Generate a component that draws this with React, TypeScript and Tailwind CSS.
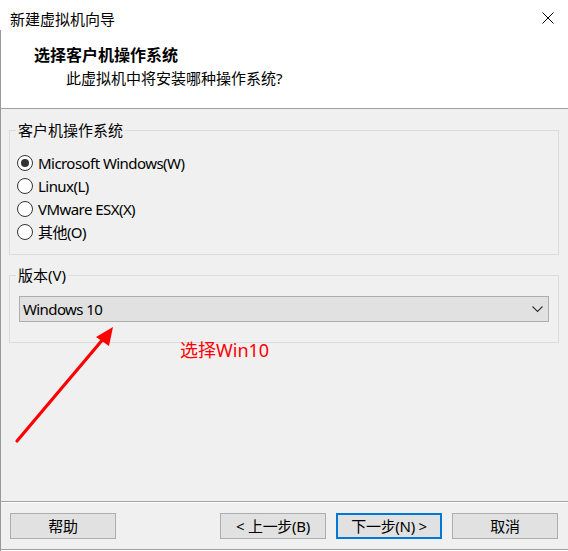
import React from "react";

const FONT = { fontFamily: '"Noto Sans", "Noto Sans CJK SC", sans-serif' };

function Radio({ label, checked }: { label: string; checked?: boolean }) {
  return (
    <div className="flex items-center h-[23px]">
      <div className="w-[16px] h-[16px] rounded-full border border-[#333333] bg-white flex items-center justify-center">
        {checked && <div className="w-[8px] h-[8px] rounded-full bg-[#333333]" />}
      </div>
      <span className="ml-[5px] leading-[20px] tracking-[-0.55px]">{label}</span>
    </div>
  );
}

function Btn({ children, primary }: { children: React.ReactNode; primary?: boolean }) {
  return (
    <div
      className={
        "w-[106px] h-[26px] flex items-center justify-center bg-[#e1e1e1] leading-[20px] tracking-[-0.3px] " +
        (primary ? "border-2 border-[#0078d7]" : "border border-[#adadad]")
      }
    >
      {children}
    </div>
  );
}

export default function App() {
  return (
    <div className="w-[568px] h-[551px] bg-white flex flex-col text-[15px] text-black relative" style={FONT}>
      {/* title bar */}
      <div className="h-[30px] flex items-start justify-between pl-[10px] pr-[14px] pt-[9px]">
        <span className="leading-[20px]">新建虚拟机向导</span>
        <svg width="12" height="12" viewBox="0 0 12 12" className="mt-[3px]">
          <path d="M0.5 0.5 L11.5 11.5 M11.5 0.5 L0.5 11.5" stroke="#000" strokeWidth="1" />
        </svg>
      </div>
      <div className="flex-1 flex flex-col border-l border-[#999999]">
        {/* header */}
        <div className="h-[78px] bg-white pt-[15px]">
          <div className="pl-[33px] font-bold text-[16px] leading-[20px]">选择客户机操作系统</div>
          <div className="pl-[65px] mt-[3px] leading-[20px]">此虚拟机中将安装哪种操作系统?</div>
        </div>
        <div className="h-px bg-[#a0a0a0]" />
        {/* body */}
        <div className="h-[392px] bg-[#f0f0f0] pt-[21px] pl-[8px] pr-[9px]">
          <div className="relative h-[125px] border border-[#dcdcdc] pl-[7px] pt-[20px]">
            <span className="absolute -top-[11px] left-[6px] px-[2px] bg-[#f0f0f0] leading-[20px]">客户机操作系统</span>
            <Radio label="Microsoft Windows(W)" checked />
            <Radio label="Linux(L)" />
            <Radio label="VMware ESX(X)" />
            <Radio label="其他(O)" />
          </div>
          <div className="relative mt-[20px] h-[68px] border border-[#dcdcdc] pl-[9px] pr-[9px] pt-[20px]">
            <span className="absolute -top-[11px] left-[6px] px-[2px] bg-[#f0f0f0] leading-[20px]">版本(V)</span>
            <div className="h-[26px] border border-[#adadad] bg-[#e1e1e1] flex items-center justify-between pl-[3px] pr-[5px]">
              <span className="leading-[20px] tracking-[-0.6px]">Windows 10</span>
              <svg width="11" height="7" viewBox="0 0 11 7">
                <path d="M0.5 0.5 L5.5 5.5 L10.5 0.5" stroke="#333" strokeWidth="1.1" fill="none" />
              </svg>
            </div>
          </div>
        </div>
        <div className="h-px bg-[#a0a0a0]" />
        <div className="h-px bg-white" />
        {/* footer */}
        <div className="h-[46px] bg-[#f0f0f0] flex items-start pt-[10px] pl-[9px] pr-[10px]">
          <Btn>帮助</Btn>
          <div className="flex-1" />
          <div className="flex gap-[10px]">
            <Btn>&lt; 上一步(B)</Btn>
            <Btn primary>下一步(N) &gt;</Btn>
            <Btn>取消</Btn>
          </div>
        </div>
        <div className="h-px bg-[#a0a0a0]" />
        <div className="flex-1 bg-white" />
      </div>

      {/* annotation */}
      <span className="absolute left-[180px] top-[338px] text-[18px] leading-[24px] text-[#ff0000]">选择Win10</span>
      <svg className="absolute left-0 top-0" width="568" height="551" viewBox="0 0 568 551" style={{ pointerEvents: "none" }}>
        <line x1="17" y1="441" x2="104" y2="338" stroke="#ff0000" strokeWidth="3.2" strokeLinecap="round" />
        <polygon points="113,327 96,337 109,346" fill="#ff0000" />
      </svg>
    </div>
  );
}
